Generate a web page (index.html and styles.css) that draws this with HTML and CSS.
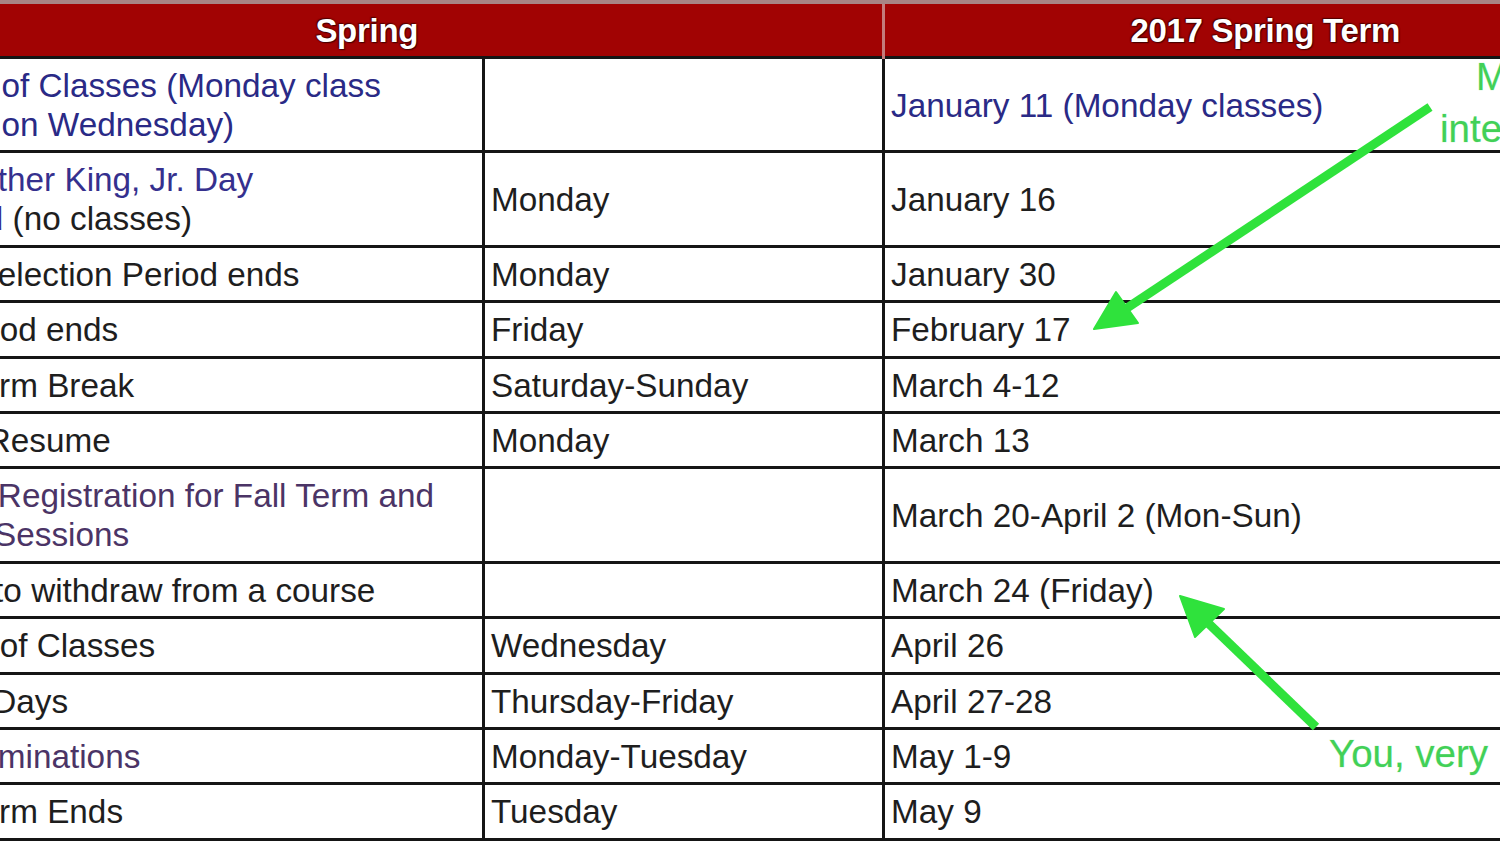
FILE: index.html
```html
<!DOCTYPE html>
<html lang="en">
<head>
<meta charset="utf-8">
<title>2017 Spring Term Calendar</title>
<link rel="stylesheet" href="styles.css">
</head>
<body>
<div class="viewport">
  <table class="cal">
    <colgroup>
      <col class="c-event">
      <col class="c-day">
      <col class="c-date">
    </colgroup>
    <thead>
      <tr>
        <th colspan="2" class="h-spring">Spring</th>
        <th class="h-term">2017 Spring Term</th>
      </tr>
    </thead>
    <tbody>
      <tr class="tall">
        <td><span class="link">First Day of Classes (Monday class<br>schedule on Wednesday)</span></td>
        <td></td>
        <td><span class="link">January 11 (Monday classes)</span></td>
      </tr>
      <tr class="tall">
        <td><span class="link2">Martin Luther King, Jr. Day<br>Observed</span> (no classes)</td>
        <td>Monday</td>
        <td>January 16</td>
      </tr>
      <tr>
        <td>Course Selection Period ends</td>
        <td>Monday</td>
        <td>January 30</td>
      </tr>
      <tr>
        <td>Drop Period ends</td>
        <td>Friday</td>
        <td>February 17</td>
      </tr>
      <tr>
        <td>Spring Term Break</td>
        <td>Saturday-Sunday</td>
        <td>March 4-12</td>
      </tr>
      <tr>
        <td>Classes Resume</td>
        <td>Monday</td>
        <td>March 13</td>
      </tr>
      <tr class="tall">
        <td><span class="visited">Advance Registration for Fall Term and<br>Summer Sessions</span></td>
        <td></td>
        <td>March 20-April 2 (Mon-Sun)</td>
      </tr>
      <tr>
        <td>Last day to withdraw from a course</td>
        <td></td>
        <td>March 24 (Friday)</td>
      </tr>
      <tr>
        <td>Last Day of Classes</td>
        <td>Wednesday</td>
        <td>April 26</td>
      </tr>
      <tr>
        <td>Reading Days</td>
        <td>Thursday-Friday</td>
        <td>April 27-28</td>
      </tr>
      <tr>
        <td><span class="visited">Final Examinations</span></td>
        <td>Monday-Tuesday</td>
        <td>May 1-9</td>
      </tr>
      <tr>
        <td>Spring Term Ends</td>
        <td>Tuesday</td>
        <td>May 9</td>
      </tr>
    </tbody>
  </table>

  <svg class="notes" width="1500" height="844" viewBox="0 0 1500 844">
    <g class="arrow">
      <line x1="1430" y1="107" x2="1124" y2="310" />
      <polygon points="1094,329 1116,292 1138,323" />
      <line x1="1316" y1="727" x2="1206" y2="621" />
      <polygon points="1180,596 1224,609 1195,637" />
    </g>
    <text class="note" x="1476" y="90">M</text>
    <text class="note" x="1440" y="142">inte</text>
    <text class="note" x="1329" y="767">You, very</text>
  </svg>
</div>
</body>
</html>
```

FILE: styles.css
```css
html, body {
  margin: 0;
  padding: 0;
  background: #ffffff;
  overflow: hidden;
}

.viewport {
  position: relative;
  width: 1500px;
  height: 844px;
  overflow: hidden;
}

.cal {
  margin-left: -150px;
  width: 1794px;
  table-layout: fixed;
  border-collapse: collapse;
  font-family: "Liberation Sans", Arial, Helvetica, sans-serif;
  font-size: 33.3px;
  line-height: 39px;
  color: #1e1e1e;
}

.c-event { width: 632px; }
.c-day { width: 400px; }
.c-date { width: 762px; }

.cal th {
  background: #a10303;
  color: #ffffff;
  font-weight: bold;
  font-size: 33px;
  height: 52px;
  padding: 0;
  text-align: center;
  vertical-align: middle;
  border-top: 4px solid #a88585;
  border-bottom: 2px solid #c58b8b;
  text-shadow: 0 0 2px #3a0000, 1px 1px 1px #4a0000, -1px -1px 1px #5a0000;
  letter-spacing: -0.3px;
}

.cal th.h-term {
  border-left: 3px solid #c47c7c;
}

.cal td {
  border: 3px solid #151515;
  padding: 7px 8px 6.4px 6px;
  vertical-align: middle;
  white-space: nowrap;
  overflow: hidden;
}

.link {
  color: #2a2a86;
}

.link2 {
  color: #35308e;
}

.visited {
  color: #4b3466;
}

.notes {
  position: absolute;
  left: 0;
  top: 0;
  pointer-events: none;
}

.arrow line {
  stroke: #2fe23c;
  stroke-width: 9;
  stroke-linecap: butt;
}

.arrow polygon {
  fill: #2fe23c;
  stroke: #2fe23c;
  stroke-width: 2;
  stroke-linejoin: round;
}

.note {
  font-family: "Liberation Sans", Arial, Helvetica, sans-serif;
  font-size: 38.5px;
  fill: #42d057;
  stroke: #c4f4cb;
  stroke-width: 0.6;
  paint-order: stroke;
}
```
